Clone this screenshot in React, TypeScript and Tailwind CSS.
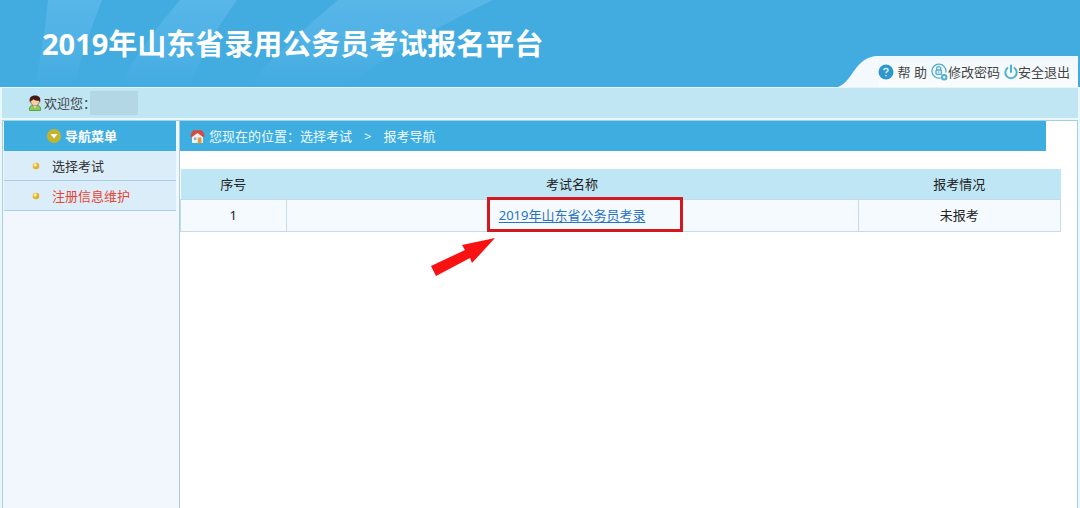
const font = 'font-["Noto_Sans","Noto_Sans_CJK_SC",sans-serif]'

function HeaderRays() {
  return (
    <svg className="absolute inset-0 h-full w-[560px]" viewBox="0 0 560 87" preserveAspectRatio="none" aria-hidden="true">
      <defs>
        <linearGradient id="ray" x1="0" y1="0" x2="0" y2="87" gradientUnits="userSpaceOnUse">
          <stop offset="0" stopColor="#59b6e9" />
          <stop offset=".6" stopColor="#4db1e4" />
          <stop offset="1" stopColor="#42abdf" />
        </linearGradient>
      </defs>
      <path d="M48 0H102Q84 45 74 87H34Q44 45 48 0Z" fill="url(#ray)" />
      <path d="M180 0H237Q206 42 190 87H118Q145 40 180 0Z" fill="url(#ray)" />
      <path d="M338 0H493Q410 40 345 87H245Q290 40 338 0Z" fill="url(#ray)" />
    </svg>
  )
}

function HelpIcon() {
  return (
    <svg width="16" height="16" viewBox="0 0 16 16" aria-hidden="true">
      <circle cx="8" cy="8" r="7.5" fill="#2f97cb" />
      <path d="M5.8 6.3C6 3.6 10.4 3.9 10.1 6.3C9.9 7.7 8 7.700 8 9.300M8 11v1.300" fill="none" stroke="#d9f1fc" strokeWidth="1.5" />
    </svg>
  )
}

function LockIcon() {
  return (
    <svg width="17" height="18" viewBox="0 0 17 18" fill="none" stroke="#4fadcf" aria-hidden="true">
      <path d="M9.500 15A7 7 0 1 1 14.800 9.500" strokeWidth="1.3" />
      <path d="M5.700 7V5.600a2 2 0 0 1 4 0V7" strokeWidth="1.3" />
      <rect x="5" y="7" width="5.400" height="4.400" rx="1" strokeWidth="1.4" />
      <path d="M7.700 8.300v1.800" />
      <circle cx="13.200" cy="14.300" r="2.300" fill="#e8f6fb" strokeWidth="1.900" />
    </svg>
  )
}

function PowerIcon() {
  return (
    <svg width="14" height="16" viewBox="0 0 14 16" fill="none" stroke="#4bb3cd" strokeWidth="2" strokeLinecap="round" aria-hidden="true">
      <path d="M3.500 4A5.700 5.700 0 1 0 10.500 4M7 1.500V8" />
    </svg>
  )
}

function UserIcon() {
  return (
    <svg width="14" height="16" viewBox="0 0 14 16" aria-hidden="true">
      <path d="M1.500 15.500C1 11.500 3 9.800 7 9.800s6 1.700 5.500 5.700Z" fill="#8ccb5a" stroke="#4f8f35" strokeWidth=".8" />
      <path d="M5 10.300L7 13L9 10.300Z" fill="#fff" />
      <ellipse cx="7" cy="6.600" rx="4.200" ry="4.400" fill="#f7cfa4" stroke="#8d4a2e" strokeWidth=".6" />
      <path d="M2 7.600C.6 3 3 .6 7 .6s6.300 2.400 5 7L11 5.500C8.500 6 6.500 5.500 5.500 4.300Q4.500 5.600 3 5.800Z" fill="#4a1717" />
    </svg>
  )
}

function HomeIcon() {
  return (
    <svg width="15" height="15" viewBox="0 0 15 15" aria-hidden="true">
      <path d="M2 7L7.500 3L13 7V14H2Z" fill="#f2f0ef" />
      <path d="M.3 7.500L1.500 3.500L3.500 1.300H11.500L13.500 3.500L14.700 7.500L13 8L7.500 4L2 8Z" fill="#d8483f" />
      <path d="M7.800 8.500H11.500V14.300H7.800Z" fill="#e09a3c" />
      <path d="M4 8.500H6.300V11H4Z" fill="#8fa9bf" />
    </svg>
  )
}

function ArrowBadge() {
  return (
    <svg width="14" height="14" viewBox="0 0 14 14" aria-hidden="true">
      <circle cx="7" cy="7" r="7" fill="#c5b32c" />
      <path d="M3.500 5H10.500L7 9.500Z" fill="#fff" />
    </svg>
  )
}

function Bullet() {
  return (
    <svg width="8" height="8" viewBox="0 0 8 8" aria-hidden="true">
      <circle cx="4" cy="4" r="3.300" fill="#e5b02a" />
      <circle cx="3.200" cy="3" r="1.700" fill="#fff0a0" />
    </svg>
  )
}

const menu = [
  { label: "选择考试", color: "text-[#333]" },
  { label: "注册信息维护", color: "text-[#e8452f]" },
]

export default function App() {
  return (
    <div className={`${font} flex min-h-screen flex-col bg-[#eaf7fc] text-[13px] leading-5 text-[#222]`}>
      <header className="relative flex h-[87px] justify-between overflow-hidden bg-[#42abe0]">
        <HeaderRays />
        <h1 className="relative pt-6 pl-[42px] text-[29px] leading-10 font-bold whitespace-nowrap text-white">2019年山东省录用公务员考试报名平台</h1>
        <div className="relative flex items-end pr-[2px]">
          <svg width="40" height="31" viewBox="0 0 40 31" aria-hidden="true">
            <path d="M0 31C15 26 17 0 40 0V31Z" fill="#f3f9fc" />
          </svg>
          <nav className="flex h-[31px] items-center bg-gradient-to-b from-[#f0f7fb] to-[#fafdfe] pr-2 text-[#444]">
            <a href="#" className="flex items-center gap-1"><HelpIcon />帮 助</a>
            <a href="#" className="ml-1 flex items-center"><LockIcon />修改密码</a>
            <a href="#" className="ml-1 flex items-center"><PowerIcon />安全退出</a>
          </nav>
        </div>
      </header>

      <div className="mx-[2px] flex h-[31px] items-center border-t border-[#e4f6fc] bg-[#c0e6f4] pl-[26px] text-[#444]">
        <UserIcon />
        <span className="ml-[2px]">欢迎您：</span>
        <span className="-ml-[6px] h-6 w-12 bg-[#b3d7e4]" />
      </div>

      <div className="mx-[2px] mt-[2px] flex flex-1 border-x border-t border-[#a5cfe4] bg-white">
        <aside className="w-[177px] shrink-0 border-r border-[#a5cfe4] bg-[#f1f7fd] pr-[3px] pl-px">
          <h2 className="flex h-[30px] items-center justify-center gap-1 bg-[#3daedf] pr-4 font-bold text-white">
            <ArrowBadge />导航菜单
          </h2>
          <ul>
            {menu.map((item) => (
              <li key={item.label} className="border-b border-[#a9cfe6] bg-[#dcedfa]">
                <a href="#" className={`flex h-[29px] items-center gap-3 pl-7 ${item.color}`}>
                  <Bullet />{item.label}
                </a>
              </li>
            ))}
          </ul>
        </aside>

        <main className="min-w-0 flex-1">
          <div className="mr-[31px] flex h-[30px] items-center bg-[#3daedf] pl-[10px] text-[#eefaff]">
            <HomeIcon />
            <span className="ml-1">您现在的位置：选择考试</span>
            <span className="mx-3">&gt;</span>
            <span>报考导航</span>
          </div>
          <div className="mt-[18px] mr-4">
            <table className="w-full table-fixed border-collapse text-center">
              <thead>
                <tr className="h-[30px] bg-[#bfe6f4]">
                  <th className="w-[12%] font-normal">序号</th>
                  <th className="font-normal">考试名称</th>
                  <th className="w-[23%] font-normal">报考情况</th>
                </tr>
              </thead>
              <tbody>
                <tr className="h-8 bg-[#f4fafe]">
                  <td className="border border-[#c5dbea]">1</td>
                  <td className="border border-[#c5dbea]">
                    <span className="relative inline-block">
                      <a href="#" className="text-[#2872c0] underline underline-offset-2">2019年山东省公务员考录</a>
                      <span className="absolute -top-2 -left-3 h-[35px] w-[196px] border-3 border-[#d3191f]" />
                      <svg className="absolute top-8 -left-[70px]" width="68" height="40" viewBox="0 0 68 40" aria-hidden="true">
                        <path d="M66 1L43 26L41 21L7 39L2 29L36 13L33 8Z" fill="#f81212" />
                      </svg>
                    </span>
                  </td>
                  <td className="border border-[#c5dbea]">未报考</td>
                </tr>
              </tbody>
            </table>
          </div>
        </main>
      </div>
    </div>
  )
}
